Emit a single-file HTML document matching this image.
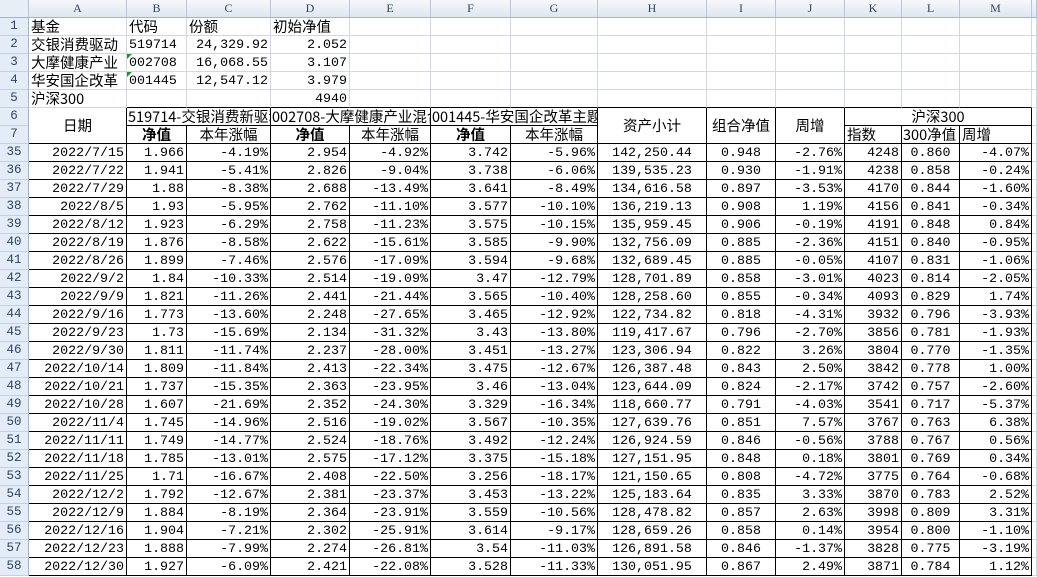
<!DOCTYPE html>
<html><head><meta charset="utf-8">
<style>
*{margin:0;padding:0;box-sizing:border-box}
body{width:1037px;height:577px;overflow:hidden;background:#fff;font-family:"Liberation Mono","Noto Sans CJK SC",monospace;font-size:13.3px;color:#000}
table{border-collapse:separate;border-spacing:0;table-layout:fixed;width:1037px}
td{height:18px;padding:0 2px;border-right:1px solid #d0d7e5;border-bottom:1px solid #d0d7e5;white-space:nowrap;overflow:hidden;line-height:17px;vertical-align:bottom}
tr.h td{height:17px;background:linear-gradient(#f6f8fb,#dfe6f0);color:#2c4563;text-align:center;font-size:12px;border-right:1px solid #b8c6da;border-bottom:1px solid #9eb6ce;font-family:"Liberation Serif",serif}
td.rh{background:#e4ecf7;color:#2c4563;text-align:center;font-size:12.5px;border-right:1px solid #9eb6ce;border-bottom:1px solid #c5d1e2;padding:0}
.c{font-family:"Noto Sans CJK SC","WenQuanYi Zen Hei",sans-serif;font-size:14.5px}
.r{text-align:right}.m{text-align:center}.l{text-align:left}
.b{border-right:1px solid #000!important;border-bottom:1px solid #000!important}
.bd{font-weight:bold}
.g{position:relative}
.g:before{content:"";position:absolute;left:0;top:0;border-top:5px solid #1a9a1a;border-right:5px solid transparent}
#d td:not(.rh):not(:last-child){border-right:1px solid #000;border-bottom:1px solid #000}
#d td.a{text-align:right}
</style></head><body>
<table>
<colgroup><col style="width:29px"><col style="width:98px"><col style="width:60px"><col style="width:84px"><col style="width:79px"><col style="width:81px"><col style="width:80px"><col style="width:87px"><col style="width:109px"><col style="width:69px"><col style="width:69px"><col style="width:57px"><col style="width:58px"><col style="width:72px"><col style="width:5px"></colgroup>
<tr class="h"><td style="background:#e8eef6"></td><td>A</td><td>B</td><td>C</td><td>D</td><td>E</td><td>F</td><td>G</td><td>H</td><td>I</td><td>J</td><td>K</td><td>L</td><td>M</td><td></td></tr>
<tr><td class="rh">1</td><td class="c">基金</td><td class="c">代码</td><td class="c">份额</td><td class="c">初始净值</td><td></td><td></td><td></td><td></td><td></td><td></td><td></td><td></td><td></td><td></td></tr>
<tr><td class="rh">2</td><td class="c">交银消费驱动</td><td>519714</td><td class="r">24,329.92</td><td class="r">2.052</td><td></td><td></td><td></td><td></td><td></td><td></td><td></td><td></td><td></td><td></td></tr>
<tr><td class="rh">3</td><td class="c">大摩健康产业</td><td class="g">002708</td><td class="r">16,068.55</td><td class="r">3.107</td><td></td><td></td><td></td><td></td><td></td><td></td><td></td><td></td><td></td><td></td></tr>
<tr><td class="rh">4</td><td class="c">华安国企改革</td><td class="g">001445</td><td class="r">12,547.12</td><td class="r">3.979</td><td></td><td></td><td></td><td></td><td></td><td></td><td></td><td></td><td></td><td></td></tr>
<tr><td class="rh">5</td><td class="c">沪深300</td><td style="border-bottom-color:#000"></td><td style="border-bottom-color:#000"></td><td class="r" style="border-bottom-color:#000">4940</td><td style="border-bottom-color:#000"></td><td style="border-bottom-color:#000"></td><td style="border-bottom-color:#000"></td><td style="border-bottom-color:#000"></td><td style="border-bottom-color:#000"></td><td style="border-bottom-color:#000"></td><td style="border-bottom-color:#000"></td><td style="border-bottom-color:#000"></td><td style="border-bottom-color:#000"></td><td></td></tr>
<tr><td class="rh">6</td><td rowspan="2" class="c m b" style="vertical-align:middle">日期</td><td colspan="2" class="c l b" style="padding:0 1px">519714-交银消费新驱动</td><td colspan="2" class="c l b" style="padding:0 1px">002708-大摩健康产业混合</td><td colspan="2" class="c l b" style="padding:0 1px">001445-华安国企改革主题</td><td rowspan="2" class="c m b" style="vertical-align:middle">资产小计</td><td rowspan="2" class="c m b" style="vertical-align:middle">组合净值</td><td rowspan="2" class="c m b" style="vertical-align:middle">周增</td><td colspan="3" class="c m b">沪深300</td><td></td></tr>
<tr><td class="rh">7</td><td class="c m b bd">净值</td><td class="c m b">本年涨幅</td><td class="c m b bd">净值</td><td class="c m b">本年涨幅</td><td class="c m b bd">净值</td><td class="c m b">本年涨幅</td><td class="c l b">指数</td><td class="c l b" style="padding:0 1px">300净值</td><td class="c l b">周增</td><td></td></tr>
<tbody id="d">
<tr><td class="rh">35</td><td class="a">2022/7/15</td><td class="a">1.966</td><td class="a">-4.19%</td><td class="a">2.954</td><td class="a">-4.92%</td><td class="a">3.742</td><td class="a">-5.96%</td><td class="m">142,250.44</td><td class="m">0.948</td><td class="a">-2.76%</td><td class="a">4248</td><td class="m">0.860</td><td class="a">-4.07%</td><td></td></tr>
<tr><td class="rh">36</td><td class="a">2022/7/22</td><td class="a">1.941</td><td class="a">-5.41%</td><td class="a">2.826</td><td class="a">-9.04%</td><td class="a">3.738</td><td class="a">-6.06%</td><td class="m">139,535.23</td><td class="m">0.930</td><td class="a">-1.91%</td><td class="a">4238</td><td class="m">0.858</td><td class="a">-0.24%</td><td></td></tr>
<tr><td class="rh">37</td><td class="a">2022/7/29</td><td class="a">1.88</td><td class="a">-8.38%</td><td class="a">2.688</td><td class="a">-13.49%</td><td class="a">3.641</td><td class="a">-8.49%</td><td class="m">134,616.58</td><td class="m">0.897</td><td class="a">-3.53%</td><td class="a">4170</td><td class="m">0.844</td><td class="a">-1.60%</td><td></td></tr>
<tr><td class="rh">38</td><td class="a">2022/8/5</td><td class="a">1.93</td><td class="a">-5.95%</td><td class="a">2.762</td><td class="a">-11.10%</td><td class="a">3.577</td><td class="a">-10.10%</td><td class="m">136,219.13</td><td class="m">0.908</td><td class="a">1.19%</td><td class="a">4156</td><td class="m">0.841</td><td class="a">-0.34%</td><td></td></tr>
<tr><td class="rh">39</td><td class="a">2022/8/12</td><td class="a">1.923</td><td class="a">-6.29%</td><td class="a">2.758</td><td class="a">-11.23%</td><td class="a">3.575</td><td class="a">-10.15%</td><td class="m">135,959.45</td><td class="m">0.906</td><td class="a">-0.19%</td><td class="a">4191</td><td class="m">0.848</td><td class="a">0.84%</td><td></td></tr>
<tr><td class="rh">40</td><td class="a">2022/8/19</td><td class="a">1.876</td><td class="a">-8.58%</td><td class="a">2.622</td><td class="a">-15.61%</td><td class="a">3.585</td><td class="a">-9.90%</td><td class="m">132,756.09</td><td class="m">0.885</td><td class="a">-2.36%</td><td class="a">4151</td><td class="m">0.840</td><td class="a">-0.95%</td><td></td></tr>
<tr><td class="rh">41</td><td class="a">2022/8/26</td><td class="a">1.899</td><td class="a">-7.46%</td><td class="a">2.576</td><td class="a">-17.09%</td><td class="a">3.594</td><td class="a">-9.68%</td><td class="m">132,689.45</td><td class="m">0.885</td><td class="a">-0.05%</td><td class="a">4107</td><td class="m">0.831</td><td class="a">-1.06%</td><td></td></tr>
<tr><td class="rh">42</td><td class="a">2022/9/2</td><td class="a">1.84</td><td class="a">-10.33%</td><td class="a">2.514</td><td class="a">-19.09%</td><td class="a">3.47</td><td class="a">-12.79%</td><td class="m">128,701.89</td><td class="m">0.858</td><td class="a">-3.01%</td><td class="a">4023</td><td class="m">0.814</td><td class="a">-2.05%</td><td></td></tr>
<tr><td class="rh">43</td><td class="a">2022/9/9</td><td class="a">1.821</td><td class="a">-11.26%</td><td class="a">2.441</td><td class="a">-21.44%</td><td class="a">3.565</td><td class="a">-10.40%</td><td class="m">128,258.60</td><td class="m">0.855</td><td class="a">-0.34%</td><td class="a">4093</td><td class="m">0.829</td><td class="a">1.74%</td><td></td></tr>
<tr><td class="rh">44</td><td class="a">2022/9/16</td><td class="a">1.773</td><td class="a">-13.60%</td><td class="a">2.248</td><td class="a">-27.65%</td><td class="a">3.465</td><td class="a">-12.92%</td><td class="m">122,734.82</td><td class="m">0.818</td><td class="a">-4.31%</td><td class="a">3932</td><td class="m">0.796</td><td class="a">-3.93%</td><td></td></tr>
<tr><td class="rh">45</td><td class="a">2022/9/23</td><td class="a">1.73</td><td class="a">-15.69%</td><td class="a">2.134</td><td class="a">-31.32%</td><td class="a">3.43</td><td class="a">-13.80%</td><td class="m">119,417.67</td><td class="m">0.796</td><td class="a">-2.70%</td><td class="a">3856</td><td class="m">0.781</td><td class="a">-1.93%</td><td></td></tr>
<tr><td class="rh">46</td><td class="a">2022/9/30</td><td class="a">1.811</td><td class="a">-11.74%</td><td class="a">2.237</td><td class="a">-28.00%</td><td class="a">3.451</td><td class="a">-13.27%</td><td class="m">123,306.94</td><td class="m">0.822</td><td class="a">3.26%</td><td class="a">3804</td><td class="m">0.770</td><td class="a">-1.35%</td><td></td></tr>
<tr><td class="rh">47</td><td class="a">2022/10/14</td><td class="a">1.809</td><td class="a">-11.84%</td><td class="a">2.413</td><td class="a">-22.34%</td><td class="a">3.475</td><td class="a">-12.67%</td><td class="m">126,387.48</td><td class="m">0.843</td><td class="a">2.50%</td><td class="a">3842</td><td class="m">0.778</td><td class="a">1.00%</td><td></td></tr>
<tr><td class="rh">48</td><td class="a">2022/10/21</td><td class="a">1.737</td><td class="a">-15.35%</td><td class="a">2.363</td><td class="a">-23.95%</td><td class="a">3.46</td><td class="a">-13.04%</td><td class="m">123,644.09</td><td class="m">0.824</td><td class="a">-2.17%</td><td class="a">3742</td><td class="m">0.757</td><td class="a">-2.60%</td><td></td></tr>
<tr><td class="rh">49</td><td class="a">2022/10/28</td><td class="a">1.607</td><td class="a">-21.69%</td><td class="a">2.352</td><td class="a">-24.30%</td><td class="a">3.329</td><td class="a">-16.34%</td><td class="m">118,660.77</td><td class="m">0.791</td><td class="a">-4.03%</td><td class="a">3541</td><td class="m">0.717</td><td class="a">-5.37%</td><td></td></tr>
<tr><td class="rh">50</td><td class="a">2022/11/4</td><td class="a">1.745</td><td class="a">-14.96%</td><td class="a">2.516</td><td class="a">-19.02%</td><td class="a">3.567</td><td class="a">-10.35%</td><td class="m">127,639.76</td><td class="m">0.851</td><td class="a">7.57%</td><td class="a">3767</td><td class="m">0.763</td><td class="a">6.38%</td><td></td></tr>
<tr><td class="rh">51</td><td class="a">2022/11/11</td><td class="a">1.749</td><td class="a">-14.77%</td><td class="a">2.524</td><td class="a">-18.76%</td><td class="a">3.492</td><td class="a">-12.24%</td><td class="m">126,924.59</td><td class="m">0.846</td><td class="a">-0.56%</td><td class="a">3788</td><td class="m">0.767</td><td class="a">0.56%</td><td></td></tr>
<tr><td class="rh">52</td><td class="a">2022/11/18</td><td class="a">1.785</td><td class="a">-13.01%</td><td class="a">2.575</td><td class="a">-17.12%</td><td class="a">3.375</td><td class="a">-15.18%</td><td class="m">127,151.95</td><td class="m">0.848</td><td class="a">0.18%</td><td class="a">3801</td><td class="m">0.769</td><td class="a">0.34%</td><td></td></tr>
<tr><td class="rh">53</td><td class="a">2022/11/25</td><td class="a">1.71</td><td class="a">-16.67%</td><td class="a">2.408</td><td class="a">-22.50%</td><td class="a">3.256</td><td class="a">-18.17%</td><td class="m">121,150.65</td><td class="m">0.808</td><td class="a">-4.72%</td><td class="a">3775</td><td class="m">0.764</td><td class="a">-0.68%</td><td></td></tr>
<tr><td class="rh">54</td><td class="a">2022/12/2</td><td class="a">1.792</td><td class="a">-12.67%</td><td class="a">2.381</td><td class="a">-23.37%</td><td class="a">3.453</td><td class="a">-13.22%</td><td class="m">125,183.64</td><td class="m">0.835</td><td class="a">3.33%</td><td class="a">3870</td><td class="m">0.783</td><td class="a">2.52%</td><td></td></tr>
<tr><td class="rh">55</td><td class="a">2022/12/9</td><td class="a">1.884</td><td class="a">-8.19%</td><td class="a">2.364</td><td class="a">-23.91%</td><td class="a">3.559</td><td class="a">-10.56%</td><td class="m">128,478.82</td><td class="m">0.857</td><td class="a">2.63%</td><td class="a">3998</td><td class="m">0.809</td><td class="a">3.31%</td><td></td></tr>
<tr><td class="rh">56</td><td class="a">2022/12/16</td><td class="a">1.904</td><td class="a">-7.21%</td><td class="a">2.302</td><td class="a">-25.91%</td><td class="a">3.614</td><td class="a">-9.17%</td><td class="m">128,659.26</td><td class="m">0.858</td><td class="a">0.14%</td><td class="a">3954</td><td class="m">0.800</td><td class="a">-1.10%</td><td></td></tr>
<tr><td class="rh">57</td><td class="a">2022/12/23</td><td class="a">1.888</td><td class="a">-7.99%</td><td class="a">2.274</td><td class="a">-26.81%</td><td class="a">3.54</td><td class="a">-11.03%</td><td class="m">126,891.58</td><td class="m">0.846</td><td class="a">-1.37%</td><td class="a">3828</td><td class="m">0.775</td><td class="a">-3.19%</td><td></td></tr>
<tr><td class="rh">58</td><td class="a">2022/12/30</td><td class="a">1.927</td><td class="a">-6.09%</td><td class="a">2.421</td><td class="a">-22.08%</td><td class="a">3.528</td><td class="a">-11.33%</td><td class="m">130,051.95</td><td class="m">0.867</td><td class="a">2.49%</td><td class="a">3871</td><td class="m">0.784</td><td class="a">1.12%</td><td></td></tr>
</tbody>
</table>
</body></html>
